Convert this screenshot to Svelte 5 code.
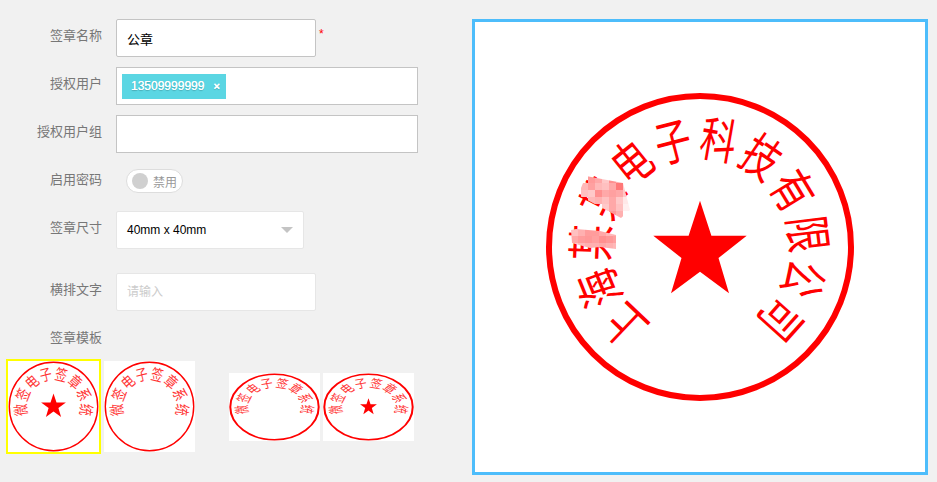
<script>
	// big seal on the right
	const chars = '上海某某电子科技有限公司'.split('');
	const star = '700,200.7 711.4,235.7 746.7,235.7 718.5,258 729,293.3 700,271.7 671,293.3 681.5,258 653.3,235.7 688.6,235.7';

	// mosaic that hides two of the characters
	const size = 7;
	const mosaicA = [
		[588, 176, ['#ff9a9a', '#ffa8a8', '#ffc8c8', '#ff9090', '#ffb0b0', '#ffe8e8']],
		[581, 183, ['#ffb8b8', '#ffa0a0', '#ffb8b8', '#ffc0c0', '#ffa8a8', '#ff7878', '#ffd0d0']],
		[581, 190, ['#ffc0c0', '#ffc8c8', '#ff9090', '#ffa8a8', '#ffa0a0', '#ffa8a8', '#ffc8c8']],
		[588, 197, ['#ffb8b8', '#ffb0b0', '#ffc0c0', '#ffa8a8', '#ffc8c8', '#ffe8e8']],
		[602, 204, ['#ffc8c8', '#ffa8a8', '#ffc0c0', '#fff0f0']],
		[609, 211, ['#ff9898', '#ffb0b0']]
	];
	const mosaicB = [
		[571, 229, ['#ffc0c0', '#ffb0b0', '#ff9c9c', '#ff9c9c', '#ffa8a8', '#ffb8b8', '#ffb0b0']],
		[571, 236, ['#ffa8a8', '#ff9c9c', '#ff9898', '#ffa0a0', '#ff9090', '#ff9898', '#ffa0a0']],
		[571, 243, ['#ffc8c8', '#ffb8b8', '#ffb0b0', '#ffb0b0', '#ffa8a8', '#ffb0b0', '#ffb8b8']]
	];

	const thumbChars = '微签电子签章系统'.split('');
	const thumbStar = '0,-13 3,-4 12.4,-4 4.9,1.5 7.6,10.5 0,5 -7.6,10.5 -4.9,1.5 -12.4,-4 -3,-4';
</script>

{#snippet thumb(height, squash, withStar)}
	<svg class="thumb" width="91" height={height} viewBox="-45.5 {-height / 2} 91 {height}">
		<g transform="scale(1 {squash})">
			<circle r="44.2" fill="none" stroke="#f00" stroke-width={squash < 1 ? 2 : 1.4} />
			{#each thumbChars as c, i}
				<text
					class="thumb-char"
					transform="rotate({-96 + i * 27.4}) translate(0 -32) scale(1 1.3)"
					text-anchor="middle"
					dominant-baseline="central">{c}</text>
			{/each}
		</g>
		{#if withStar}
			<polygon points={thumbStar} fill="#f00" transform={squash < 1 ? 'scale(0.68)' : ''} />
		{/if}
	</svg>
{/snippet}

<div class="page">
	<div class="form">
		<div class="row">
			<span class="label">签章名称</span>
			<input class="field short name" value="公章" />
			<span class="required">*</span>
		</div>
		<div class="row">
			<span class="label">授权用户</span>
			<div class="field wide square">
				<span class="tag">13509999999<i>×</i></span>
			</div>
		</div>
		<div class="row">
			<span class="label">授权用户组</span>
			<div class="field wide square"></div>
		</div>
		<div class="row toggle-row">
			<span class="label">启用密码</span>
			<div class="toggle"><span class="knob"></span>禁用</div>
		</div>
		<div class="row select-row">
			<span class="label">签章尺寸</span>
			<div class="field select">40mm x 40mm<span class="arrow"></span></div>
		</div>
		<div class="row text-row">
			<span class="label">横排文字</span>
			<input class="field short light" placeholder="请输入" />
		</div>
		<div class="row title-row">
			<span class="label">签章模板</span>
		</div>
		<div class="thumbs">
			<div class="selected">{@render thumb(91, 1, true)}</div>
			{@render thumb(91, 1, false)}
			<div class="spacer"></div>
			{@render thumb(68, 0.74, false)}
			{@render thumb(68, 0.74, true)}
		</div>
	</div>

	<div class="preview">
		<svg width="450" height="450" viewBox="475 22 450 450">
			<defs>
				<clipPath id="clip-a">
					<polygon points="586,176 623,183 630,210 621,218 578,195" />
				</clipPath>
				<clipPath id="clip-b">
					<polygon points="571,230 576,229 600,231 616,235 616,249 600,247 590,248 572,243" />
				</clipPath>
			</defs>
			<circle cx="700" cy="247" r="151" fill="none" stroke="#f00" stroke-width="6" />
			{#each chars as c, i}
				<text
					class="seal-char"
					transform="translate(700 247) rotate({-136.5 + i * 24.4}) translate(0 -107) scale(1 1.35)"
					text-anchor="middle"
					dominant-baseline="central">{c}</text>
			{/each}
			<polygon points={star} fill="#f00" />
			<g clip-path="url(#clip-a)">
				{#each mosaicA as [x, y, cells]}
					{#each cells as fill, i}
						<rect x={x + i * size} {y} width={size} height={size} {fill} />
					{/each}
				{/each}
			</g>
			<g clip-path="url(#clip-b)">
				{#each mosaicB as [x, y, cells]}
					{#each cells as fill, i}
						<rect x={x + i * size} {y} width={size} height={size} {fill} />
					{/each}
				{/each}
			</g>
		</svg>
	</div>
</div>

<style>
	:global(body) {
		background: #f1f1f1;
		font-family: 'Liberation Sans', 'Noto Sans CJK SC', sans-serif;
	}

	.page {
		display: flex;
		align-items: flex-start;
		height: 482px;
		box-sizing: border-box;
		padding-top: 19px;
		overflow: hidden;
	}

	.form {
		width: 472px;
		flex: none;
	}

	.row {
		display: flex;
		align-items: flex-start;
		margin-bottom: 10px;
	}

	.label {
		width: 102px;
		margin-right: 14px;
		flex: none;
		text-align: right;
		font-size: 13px;
		line-height: 34px;
		color: #777;
	}

	.field {
		box-sizing: border-box;
		height: 38px;
		margin: 0;
		padding: 0 10px;
		background: #fff;
		border: 1px solid #c4c4c4;
		border-radius: 2px;
		font-family: inherit;
		font-size: 12px;
		color: #000;
		outline: none;
	}

	.name {
		font-size: 13px;
	}

	.short {
		width: 200px;
	}

	.wide {
		width: 302px;
	}

	.square {
		display: flex;
		align-items: center;
		padding: 0 5px;
		border-radius: 0;
	}

	.light {
		border-color: #e6e6e6;
	}

	.light::placeholder {
		color: #ccc;
		opacity: 1;
	}

	.required {
		margin: 8px 0 0 3px;
		font-size: 12px;
		line-height: 14px;
		color: #f00;
	}

	.tag {
		display: flex;
		align-items: center;
		box-sizing: border-box;
		width: 104px;
		height: 25px;
		padding-left: 9px;
		background: #5bd6e3;
		color: #fff;
		font-size: 12px;
		text-shadow: 0 0 0.6px #fff, 0 1px 1px rgba(0, 0, 0, 0.2);
	}

	.tag i {
		margin-left: 9px;
		font-style: normal;
		font-weight: 700;
		font-size: 11px;
	}

	.toggle-row {
		height: 36px;
		margin-bottom: 12px;
	}

	.toggle {
		display: flex;
		align-items: center;
		box-sizing: border-box;
		width: 57px;
		height: 24px;
		margin: 6px 0 0 10px;
		padding-left: 5px;
		background: #fff;
		border: 1px solid #ddd;
		border-radius: 12px;
		font-size: 12px;
		color: #999;
	}

	.knob {
		width: 16px;
		height: 16px;
		margin-right: 5px;
		border-radius: 50%;
		background: #d0d0d0;
	}

	.select-row {
		margin-bottom: 24px;
	}

	.select {
		display: flex;
		align-items: center;
		justify-content: space-between;
		width: 188px;
		border-color: #e6e6e6;
	}

	.arrow {
		width: 0;
		height: 0;
		border-left: 6px solid transparent;
		border-right: 6px solid transparent;
		border-top: 6px solid #c4c4c4;
	}

	.text-row {
		margin-bottom: 17px;
	}

	.title-row {
		height: 20px;
		margin-bottom: 11px;
	}

	.title-row .label {
		line-height: 20px;
	}

	.thumbs {
		display: flex;
		align-items: center;
		gap: 3px;
		margin-left: 6px;
	}

	.selected {
		display: flex;
		border: 2px solid #ff0;
	}

	.spacer {
		width: 28px;
	}

	.thumb {
		display: block;
		flex: none;
		background: #fff;
	}

	.thumb-char {
		font-size: 12px;
		font-family: 'Liberation Serif', 'Noto Sans CJK SC', serif;
		fill: #f00;
		opacity: 0.8;
	}

	.preview {
		box-sizing: border-box;
		width: 456px;
		height: 456px;
		flex: none;
		background: #fff;
		border: 3px solid #4dbdfb;
	}

	.preview svg {
		display: block;
	}

	.seal-char {
		font-size: 36px;
		font-family: 'Liberation Serif', 'Noto Sans CJK SC', serif;
		font-weight: 400;
		fill: #f00;
	}
</style>
